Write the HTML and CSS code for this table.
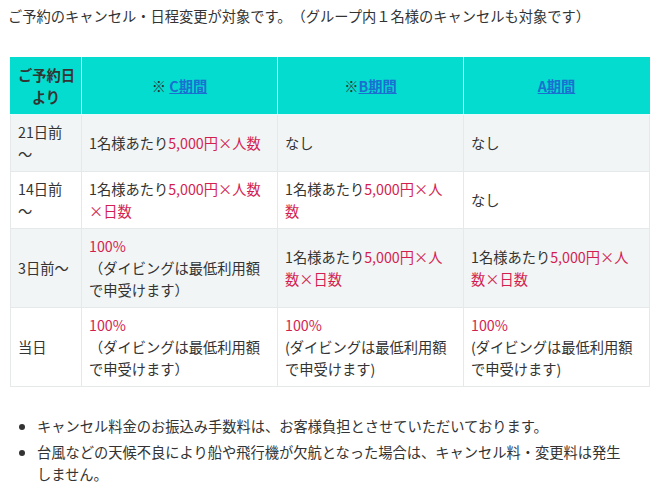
FILE: index.html
```html
<!DOCTYPE html>
<html lang="ja">
<head>
<meta charset="utf-8">
<link rel="stylesheet" href="styles.css">
</head>
<body>
<div class="page">
  <p class="lead">ご予約のキャンセル・日程変更が対象です。（グループ内１名様のキャンセルも対象です）</p>
  <table class="fee">
    <colgroup>
      <col class="c1"><col class="c2"><col class="c3"><col class="c4">
    </colgroup>
    <thead>
      <tr>
        <th>ご予約日<br>より</th>
        <th>※ <a href="#">C期間</a></th>
        <th>※<a href="#">B期間</a></th>
        <th><a href="#">A期間</a></th>
      </tr>
    </thead>
    <tbody>
      <tr class="gray">
        <td>21日前<br>〜</td>
        <td>1名様あたり<span class="red">5,000円×人数</span></td>
        <td>なし</td>
        <td>なし</td>
      </tr>
      <tr>
        <td>14日前<br>〜</td>
        <td>1名様あたり<span class="red">5,000円×人数<br>×日数</span></td>
        <td>1名様あたり<span class="red">5,000円×人<br>数</span></td>
        <td>なし</td>
      </tr>
      <tr class="gray">
        <td>3日前〜</td>
        <td><span class="red">100%</span><br>（ダイビングは最低利用額<br>で申受けます）</td>
        <td>1名様あたり<span class="red">5,000円×人<br>数×日数</span></td>
        <td>1名様あたり<span class="red">5,000円×人<br>数×日数</span></td>
      </tr>
      <tr>
        <td>当日</td>
        <td><span class="red">100%</span><br>（ダイビングは最低利用額<br>で申受けます）</td>
        <td><span class="red">100%</span><br>(ダイビングは最低利用額<br>で申受けます)</td>
        <td><span class="red">100%</span><br>(ダイビングは最低利用額<br>で申受けます)</td>
      </tr>
    </tbody>
  </table>
  <ul class="notes">
    <li>キャンセル料金のお振込み手数料は、お客様負担とさせていただいております。</li>
    <li>台風などの天候不良により船や飛行機が欠航となった場合は、キャンセル料・変更料は発生<br>しません。</li>
  </ul>
</div>
</body>
</html>
```

FILE: styles.css
```css
html, body {
  margin: 0;
  padding: 0;
  background: #ffffff;
}
body {
  font-family: "Noto Sans CJK JP", "Noto Sans", sans-serif;
  font-size: 14.25px;
  line-height: 22px;
  color: #333333;
  text-spacing-trim: space-all;
}
.page {
  width: 641px;
  padding: 5px 13px 0 8px;
}
.lead {
  margin: 0 0 30px 0;
  white-space: nowrap;
}
.fee {
  border-collapse: collapse;
  table-layout: fixed;
  width: 639px;
  margin-left: 2px;
}
.c1 { width: 71px; }
.c2 { width: 196px; }
.c3 { width: 186px; }
.c4 { width: 186px; }
.fee th,
.fee td {
  padding: 6px 7px;
  text-align: left;
  vertical-align: middle;
  border: 1px solid #e6e9e9;
  white-space: nowrap;
}
.fee th {
  background: #04dccf;
  font-weight: bold;
  text-align: center;
  color: #333333;
  border-color: #e8fbfa;
  border-top-color: #04dccf;
}
.fee th:first-child { border-left-color: #04dccf; }
.fee th:last-child { border-right-color: #04dccf; }
.fee th a {
  color: #1b6fd0;
  text-decoration: underline;
}
.fee tr.gray td {
  background: #f2f5f5;
}
.red {
  color: #d31e51;
}
.notes {
  margin: 28px 0 0 0;
  padding-left: 29px;
}
.notes li {
  margin-bottom: 4px;
  white-space: nowrap;
}
```
